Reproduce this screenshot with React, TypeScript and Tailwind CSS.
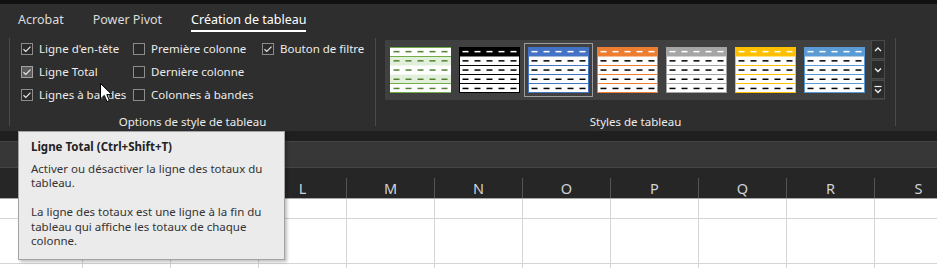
import React from "react";

type Thumb = { color: string; green?: boolean; selected?: boolean };

const thumbs: Thumb[] = [
  { color: "#70ad47", green: true },
  { color: "#000000" },
  { color: "#4472c4", selected: true },
  { color: "#ed7d31" },
  { color: "#a5a5a5" },
  { color: "#ffc000" },
  { color: "#5b9bd5" },
];

const rowY = [4.6, 13.8, 23, 32.2, 41.4];

function Dashes({ y, color }: { y: number; color: string }) {
  return (
    <>
      {[0, 1, 2, 3, 4].map((i) => (
        <rect key={i} x={3.5 + i * 12} y={y - 0.7} width={6} height={1.5} fill={color} />
      ))}
    </>
  );
}

function TableThumb({ t }: { t: Thumb }) {
  if (t.green) {
    return (
      <svg width="61" height="46" viewBox="0 0 61 46">
        <rect x="0" y="0" width="61" height="46" fill="#ffffff" />
        <rect x="0" y="10" width="61" height="8.5" fill="#e2efda" />
        <rect x="0" y="27.6" width="61" height="8.6" fill="#e2efda" />
        <rect x="0" y="0" width="61" height="1" fill={t.color} />
        <rect x="0" y="9" width="61" height="1" fill={t.color} />
        <rect x="0" y="36" width="61" height="1" fill={t.color} />
        <rect x="0" y="45" width="61" height="1" fill={t.color} />
        {rowY.map((y) => (
          <Dashes key={y} y={y} color="#548235" />
        ))}
      </svg>
    );
  }
  return (
    <svg width="61" height="46" viewBox="0 0 61 46">
      <rect x="0" y="0" width="61" height="46" fill="#ffffff" />
      <rect x="0" y="0" width="61" height="9.5" fill={t.color} />
      <rect x="0" y="18" width="61" height="1" fill={t.color} />
      <rect x="0" y="27" width="61" height="1" fill={t.color} />
      <rect x="0" y="36" width="61" height="1" fill={t.color} />
      <rect x="0.5" y="0.5" width="60" height="45" fill="none" stroke={t.color} />
      <Dashes y={rowY[0]} color="#ffffff" />
      {rowY.slice(1).map((y) => (
        <Dashes key={y} y={y} color="#000000" />
      ))}
    </svg>
  );
}

function CheckBox({ checked, hover }: { checked?: boolean; hover?: boolean }) {
  return (
    <span
      className={`flex h-[12px] w-[12px] shrink-0 items-center justify-center border ${
        hover ? "border-[#a3a3a3] bg-[#5c5c5c]" : "border-[#8c8c8c] bg-[#2a2a2a]"
      }`}
    >
      {checked && (
        <svg width="10" height="10" viewBox="0 0 10 10">
          <path d="M1.5 5.2 L3.8 7.4 L8.5 2.6" fill="none" stroke="#e8e8e8" strokeWidth="1.2" />
        </svg>
      )}
    </span>
  );
}

const options: { label: string; checked?: boolean; hover?: boolean }[] = [
  { label: "Ligne d'en-tête", checked: true },
  { label: "Première colonne" },
  { label: "Bouton de filtre", checked: true },
  { label: "Ligne Total", checked: true, hover: true },
  { label: "Dernière colonne" },
  { label: "" },
  { label: "Lignes à bandes", checked: true },
  { label: "Colonnes à bandes" },
  { label: "" },
];

// J and K sit under the tooltip, so their letters are not drawn
const columns = ["", "", "L", "M", "N", "O", "P", "Q", "R", "S"];

function ScrollButton({ kind }: { kind: "up" | "down" | "more" }) {
  return (
    <div className="flex h-[19px] w-[14px] items-center justify-center border border-[#4a4a4a] bg-[#2b2b2b]">
      <svg width="8" height="9" viewBox="0 0 8 9">
        {kind === "up" && <path d="M1 6 L4 3 L7 6" fill="none" stroke="#f0f0f0" strokeWidth="1.3" />}
        {kind === "down" && <path d="M1 3.5 L4 6.5 L7 3.5" fill="none" stroke="#f0f0f0" strokeWidth="1.3" />}
        {kind === "more" && (
          <>
            <path d="M0.5 1.5 H7.5" stroke="#f0f0f0" strokeWidth="1.2" />
            <path d="M1 4.5 L4 7.5 L7 4.5" fill="none" stroke="#f0f0f0" strokeWidth="1.3" />
          </>
        )}
      </svg>
    </div>
  );
}

export default function App() {
  return (
    <div className="relative h-[268px] w-[937px] overflow-hidden bg-white font-['Noto_Sans',sans-serif]">
      <div className="h-[4px] bg-[#111111]" />

      {/* tabs */}
      <div className="flex h-[29px] items-end gap-[29px] bg-[#2e2e2e] pb-[1px] pl-[18px] text-[12.5px] leading-[16px]">
        <span className="border-b-2 border-transparent pb-[2px] text-[#dcdcdc]">Acrobat</span>
        <span className="border-b-2 border-transparent pb-[2px] text-[#dcdcdc]">Power Pivot</span>
        <span className="border-b-2 border-white pb-[2px] text-white">Création de tableau</span>
      </div>

      {/* ribbon body */}
      <div className="flex h-[98px] bg-[#2e2e2e] text-[11.5px] leading-[16px] text-[#ececec]">
        <div className="ml-[9px] mt-[5px] h-[88px] w-px bg-[#4a4a4a]" />

        <div className="flex w-[365px] flex-col">
          <div className="grid grid-cols-[112px_129px_auto] pl-[11px] pt-[4px]">
            {options.map((o, i) => (
              <div key={i} className="flex h-[23px] items-center gap-[6px]">
                {o.label && (
                  <>
                    <CheckBox checked={o.checked} hover={o.hover} />
                    <span className="whitespace-nowrap">{o.label}</span>
                  </>
                )}
              </div>
            ))}
          </div>
          <div className="mt-auto pb-[1px] text-center">Options de style de tableau</div>
        </div>

        <div className="mt-[5px] h-[88px] w-px bg-[#4a4a4a]" />

        <div className="flex w-[519px] flex-col">
          <div className="ml-[9px] mt-[7px] flex h-[60px] w-[500px] bg-[#404040]">
            <div className="flex gap-[8px] pl-[5px] pt-[7px]">
              {thumbs.map((t, i) => (
                <div
                  key={i}
                  className={`h-[46px] w-[61px] ${
                    t.selected ? "outline outline-offset-[3px] outline-[#9c9c9c]" : ""
                  }`}
                >
                  <TableThumb t={t} />
                </div>
              ))}
            </div>
            <div className="ml-[6px] flex flex-col gap-[1px]">
              <ScrollButton kind="up" />
              <ScrollButton kind="down" />
              <ScrollButton kind="more" />
            </div>
          </div>
          <div className="mt-auto pb-[1px] text-center">Styles de tableau</div>
        </div>

        <div className="mt-[5px] h-[88px] w-px bg-[#4a4a4a]" />
      </div>

      <div className="h-[10px] bg-[#1f1f1f]" />
      <div className="h-[27px] border-y border-[#444444] bg-[#373737]" />

      {/* column headers */}
      <div className="flex h-[31px] border-b border-[#a8a8a8] bg-[#262626] text-[14.5px] leading-[16px] text-[#d0d4d9]">
        <div className="w-[83px] shrink-0" />
        {columns.map((c, i) => (
          <div key={i} className="flex w-[88px] shrink-0 items-end">
            <div className="flex-1 pb-[2px] text-center">{c}</div>
            <div className="h-[20px] w-px bg-[#555555]" />
          </div>
        ))}
      </div>

      {/* grid */}
      <div className="flex h-[70px]">
        <div className="flex w-[83px] shrink-0 flex-col border-r border-[#d4d4d4]">
          <div className="h-[20px] border-b border-[#d4d4d4]" />
          <div className="h-[45px] border-b border-[#d4d4d4]" />
        </div>
        {columns.map((_, i) => (
          <div key={i} className="flex w-[88px] shrink-0 flex-col border-r border-[#d4d4d4]">
            <div className="h-[20px] border-b border-[#d4d4d4]" />
            <div className="h-[45px] border-b border-[#d4d4d4]" />
          </div>
        ))}
      </div>

      {/* tooltip */}
      <div className="absolute left-[18px] top-[131px] h-[129px] w-[267px] border border-[#a3a3a3] bg-[#ebebeb] pl-[12px] pt-[8px] text-[11.5px] leading-[14.5px] text-[#333333] shadow-[2px_2px_3px_rgba(0,0,0,0.25)]">
        <div className="font-bold text-[#222222]">Ligne Total (Ctrl+Shift+T)</div>
        <div className="mt-[7px] whitespace-nowrap">
          <div>Activer ou désactiver la ligne des totaux du</div>
          <div>tableau.</div>
          <div className="mt-[14.5px]">La ligne des totaux est une ligne à la fin du</div>
          <div>tableau qui affiche les totaux de chaque</div>
          <div>colonne.</div>
        </div>
      </div>

      {/* mouse pointer */}
      <svg className="absolute left-[100px] top-[83px]" width="13" height="20" viewBox="0 0 13 20">
        <path
          d="M0.5 0.5 L0.5 16 L4.3 12.4 L7 18.6 L9.4 17.6 L6.8 11.6 L11.8 11.6 Z"
          fill="#ffffff"
          stroke="#000000"
          strokeWidth="1"
        />
      </svg>
    </div>
  );
}
